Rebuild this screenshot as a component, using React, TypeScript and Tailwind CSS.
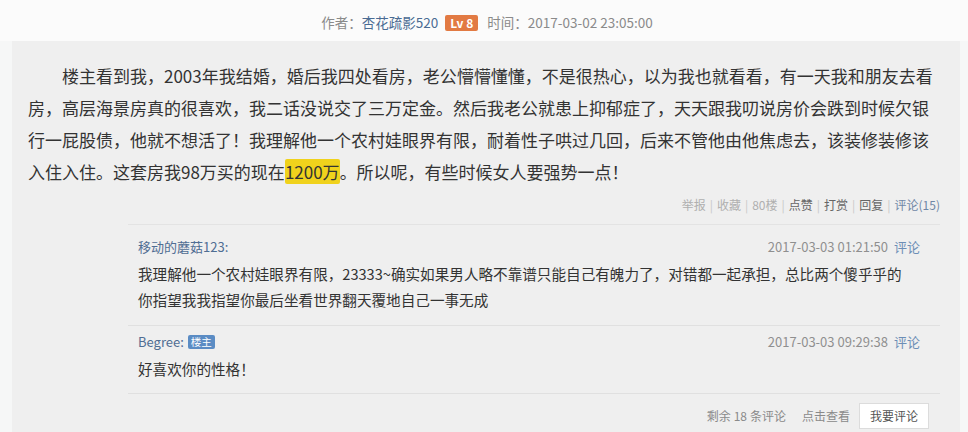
import React from "react"

const font = { fontFamily: '"Noto Sans CJK SC", "Noto Sans", sans-serif' }

type Comment = { name: string; host?: boolean; time: string; text: string }

const comments: Comment[] = [
  {
    name: "移动的蘑菇123:",
    time: "2017-03-03 01:21:50",
    text: "我理解他一个农村娃眼界有限，23333~确实如果男人略不靠谱只能自己有魄力了，对错都一起承担，总比两个傻乎乎的你指望我我指望你最后坐看世界翻天覆地自己一事无成",
  },
  { name: "Begree:", host: true, time: "2017-03-03 09:29:38", text: "好喜欢你的性格！" },
]

export default function App() {
  return (
    <div className="w-[968px] h-[432px] overflow-hidden bg-[#f6f7f7]" style={font}>
      {/* Header */}
      <div className="h-[41px] flex items-center justify-center gap-[7px] text-[13.5px] text-[#8a8a8a] bg-[#fbfbfb] pt-[4px] pl-[6px]">
        <span>
          作者：<span className="text-[#4a6b93]">杏花疏影520</span>
        </span>
        <span className="px-[5px] h-[16px] leading-[16px] rounded-[2px] bg-[#e27a43] text-white text-[12px] font-bold">Lv 8</span>
        <span className="ml-[2px]">时间：2017-03-02 23:05:00</span>
      </div>

      {/* Post panel */}
      <div className="ml-[12px] mr-[8px] h-[391px] bg-[#efefef] pt-[19px] pl-[16px] pr-[20px]">
        <p className="text-[17px] leading-[32px] text-[#333] indent-[34px]">
          楼主看到我，2003年我结婚，婚后我四处看房，老公懵懵懂懂，不是很热心，以为我也就看看，有一天我和朋友去看房，高层海景房真的很喜欢，我二话没说交了三万定金。然后我老公就患上抑郁症了，天天跟我叨说房价会跌到时候欠银行一屁股债，他就不想活了！我理解他一个农村娃眼界有限，耐着性子哄过几回，后来不管他由他焦虑去，该装修装修该入住入住。这套房我98万买的现在<mark className="bg-[#f0d21c] text-[#333] rounded-[2px]">1200万</mark>。所以呢，有些时候女人要强势一点！
        </p>

        {/* Actions */}
        <div className="mt-[7px] flex justify-end items-center text-[12px] leading-[20px] text-[#b0b0b0]">
          <span>举报</span>
          <span className="mx-[4px] text-[#c8c8c8]">|</span>
          <span>收藏</span>
          <span className="mx-[4px] text-[#c8c8c8]">|</span>
          <span>80楼</span>
          <span className="mx-[4px] text-[#c8c8c8]">|</span>
          <span className="text-[#666]">点赞</span>
          <span className="mx-[4px] text-[#c8c8c8]">|</span>
          <span className="text-[#666]">打赏</span>
          <span className="mx-[4px] text-[#c8c8c8]">|</span>
          <span className="text-[#666]">回复</span>
          <span className="mx-[4px] text-[#c8c8c8]">|</span>
          <span className="text-[#6f87a6]">评论(15)</span>
        </div>

        {/* Comments */}
        <div className="ml-[100px] mt-[9px] border-t border-[#e3e3e3]">
          {comments.map((c, i) => (
            <div key={i} className={i === 0 ? "pt-[12px] pb-[12px] px-[10px]" : "pt-[6px] pb-[11px] px-[10px] border-t border-[#e0e0e0]"}>
              <div className="flex items-center justify-between h-[20px] text-[13px] pr-[10px]">
                <div className="flex items-center gap-[4px] text-[#4f6d93]">
                  <span>{c.name}</span>
                  {c.host && (
                    <span className="h-[14px] leading-[14px] px-[3px] rounded-[2px] bg-[#5b8cc4] text-white text-[10.5px]">楼主</span>
                  )}
                </div>
                <div className="text-[#8f8f8f]">
                  {c.time}
                  <span className="ml-[6px] text-[#6c8eb6]">评论</span>
                </div>
              </div>
              <p className="mt-[4px] text-[14.6px] leading-[26px] text-[#333] pr-[24px]">{c.text}</p>
            </div>
          ))}

          {/* Footer */}
          <div className="border-t border-[#e0e0e0] pt-[9px] flex items-center justify-end pr-[11px] text-[12px] text-[#8a8a8a]">
            <span>
              剩余<span className="mx-[3px]">18</span>条评论
            </span>
            <span className="ml-[16px] mr-[9px]">点击查看</span>
            <button type="button" className="h-[26px] w-[70px] bg-white border border-[#dcdcdc] text-[#555] text-[12px]" style={font}>
              我要评论
            </button>
          </div>
        </div>
      </div>
    </div>
  )
}
